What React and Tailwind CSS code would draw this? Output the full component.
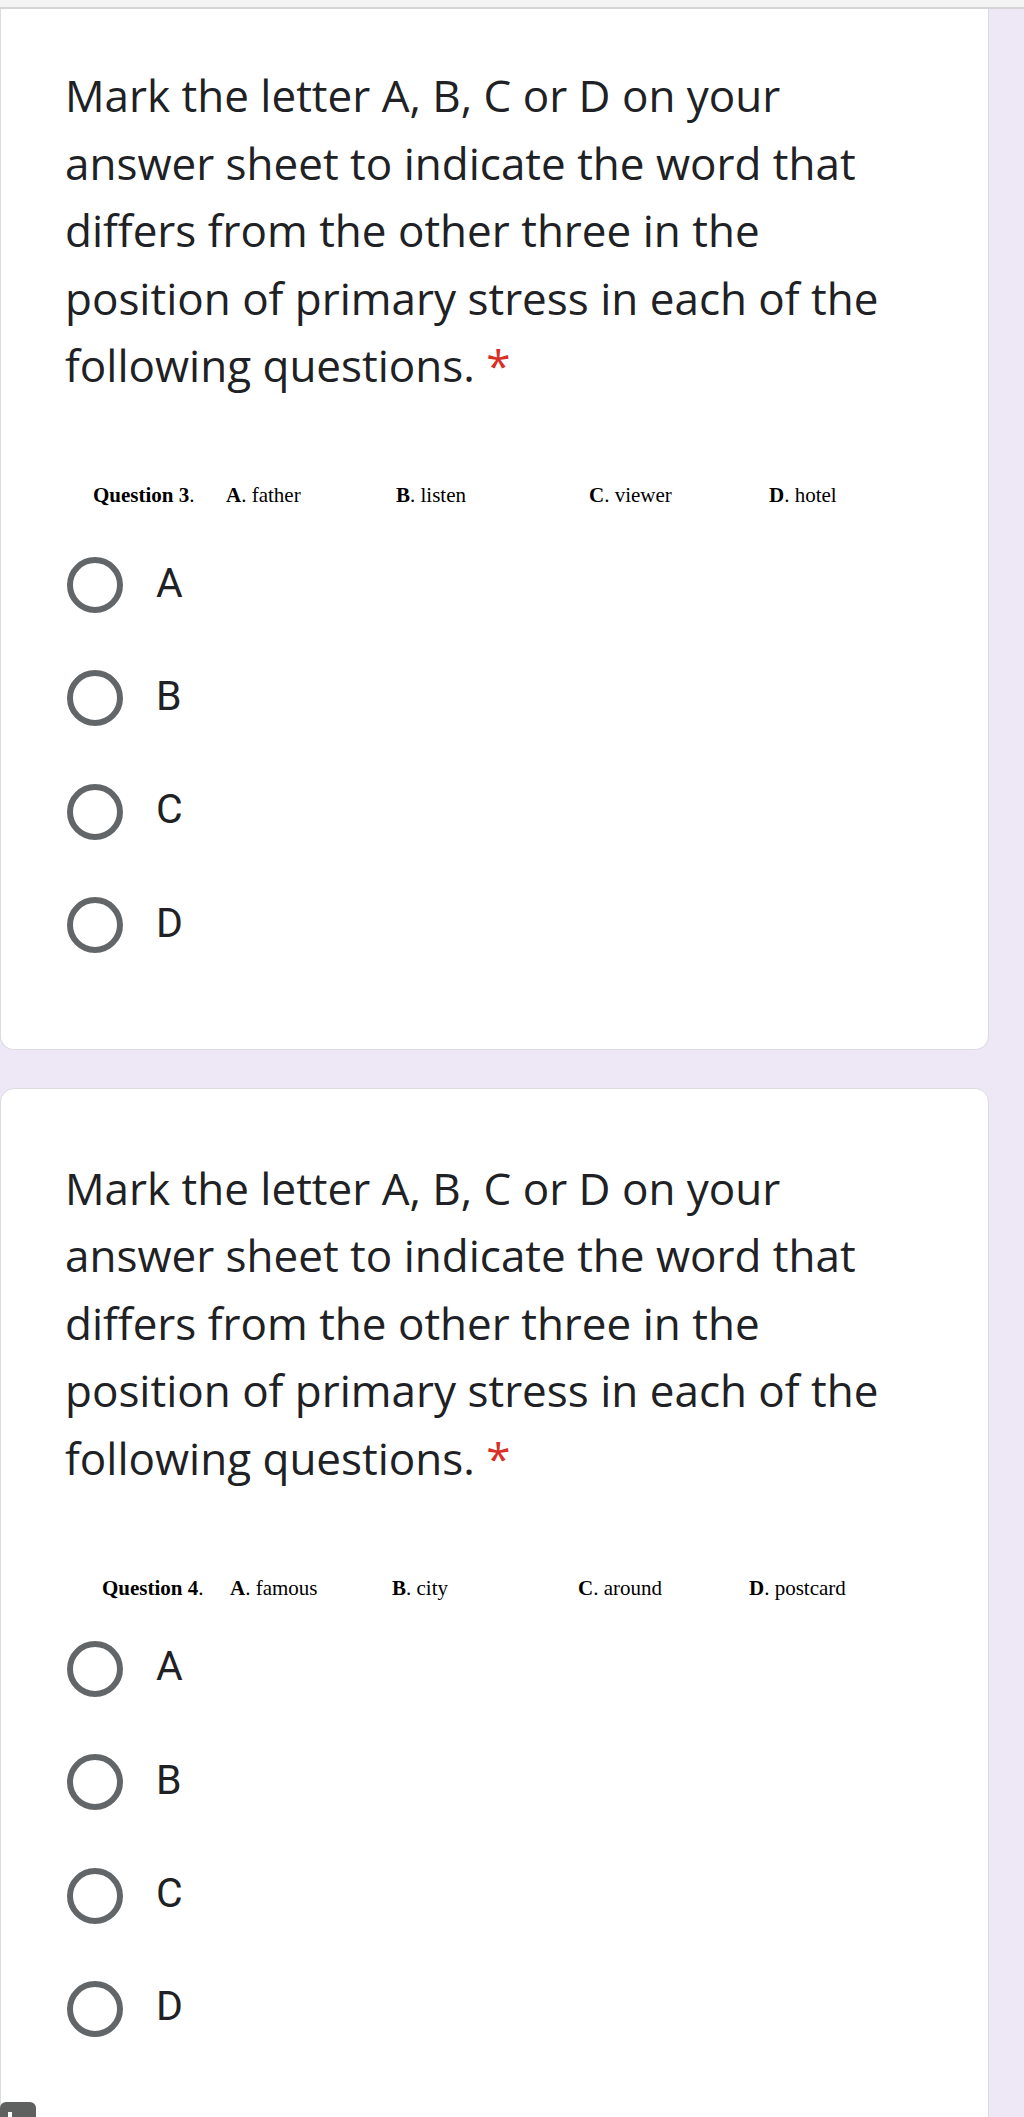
import React from 'react';

const titleLines = [
    'Mark the letter A, B, C or D on your',
    'answer sheet to indicate the word that',
    'differs from the other three in the',
    'position of primary stress in each of the',
];

const questions = [
    {
        id: 3,
        pt: 'pt-[53px]',
        card: 'border-t-0 rounded-b-[14px]',
        offset: 'ml-[25px]',
        optionsGap: 'mt-[21.5px]',
        cols: [
            { label: 'Question 3.', w: 'w-[133px]' },
            { letter: 'A.', word: 'father', w: 'w-[170px]' },
            { letter: 'B.', word: 'listen', w: 'w-[193px]' },
            { letter: 'C.', word: 'viewer', w: 'w-[180px]' },
            { letter: 'D.', word: 'hotel', w: 'w-[120px]' },
        ],
    },
    {
        id: 4,
        pt: 'pt-[66px]',
        card: 'mt-[38px] rounded-t-[14px] min-h-[1100px]',
        offset: 'ml-[34px]',
        optionsGap: 'mt-[12.5px]',
        cols: [
            { label: 'Question 4.', w: 'w-[128px]' },
            { letter: 'A.', word: 'famous', w: 'w-[162px]' },
            { letter: 'B.', word: 'city', w: 'w-[186px]' },
            { letter: 'C.', word: 'around', w: 'w-[171px]' },
            { letter: 'D.', word: 'postcard', w: 'w-[140px]' },
        ],
    },
];

const Radio = ({ letter }) => (
    <div className="h-[113.33px] flex items-center pl-[2px]">
        <div className="w-[56px] h-[56px] rounded-full border-[6px] border-[#636669] shrink-0"></div>
        <span className="ml-[33px] pb-[4px] text-[41px] leading-none text-[#202124] font-['Roboto',sans-serif]">{letter}</span>
    </div>
);

const QuestionCard = ({ q }) => (
    <div className={`bg-white border border-[#dadce0] ${q.card} ${q.pt} pb-[67px] pl-[64px]`}>
        <h2 className="font-['Open_Sans',sans-serif] text-[44px] leading-[67.5px] text-[#202124] font-normal">
            {titleLines.map((line) => (
                <span key={line} className="block whitespace-nowrap">{line}</span>
            ))}
            <span className="block whitespace-nowrap">
                following questions. <span className="text-[#d93025]">*</span>
            </span>
        </h2>

        {/* the question line is a pasted image in the form, kept as text here */}
        <div className={`mt-[83.5px] ${q.offset} flex h-[24px] items-center font-['Liberation_Serif',serif] text-[21px] leading-[24px] text-black whitespace-nowrap`}>
            <span className="w-[3px]"></span>
            {q.cols.map((c, i) => (
                <span key={i} className={c.w}>
                    {c.label ? (
                        <span className="font-bold">{c.label.replace('.', '')}<span className="font-normal">.</span></span>
                    ) : (
                        <>
                            <span className="font-bold">{c.letter.replace('.', '')}</span>. {c.word}
                        </>
                    )}
                </span>
            ))}
        </div>

        <div className={q.optionsGap}>
            {['A', 'B', 'C', 'D'].map((l) => (
                <Radio key={l} letter={l} />
            ))}
        </div>
    </div>
);

export default function App() {
    return (
        <div className="relative h-[2117px] w-[1024px] overflow-hidden bg-[#ede7f6]">
            <div className="h-[9px] bg-[#f3f3f3] border-b-2 border-[#d4d4d4]"></div>
            <div className="w-[989px]">
                {questions.map((q) => (
                    <QuestionCard key={q.id} q={q} />
                ))}
            </div>
            <div className="absolute left-0 top-[2102px] w-[36px] h-[30px] rounded-[6px] bg-[#5f6060]">
                <div className="absolute left-[8px] top-[10px] w-[4px] h-[6px] bg-white"></div>
            </div>
        </div>
    );
}
